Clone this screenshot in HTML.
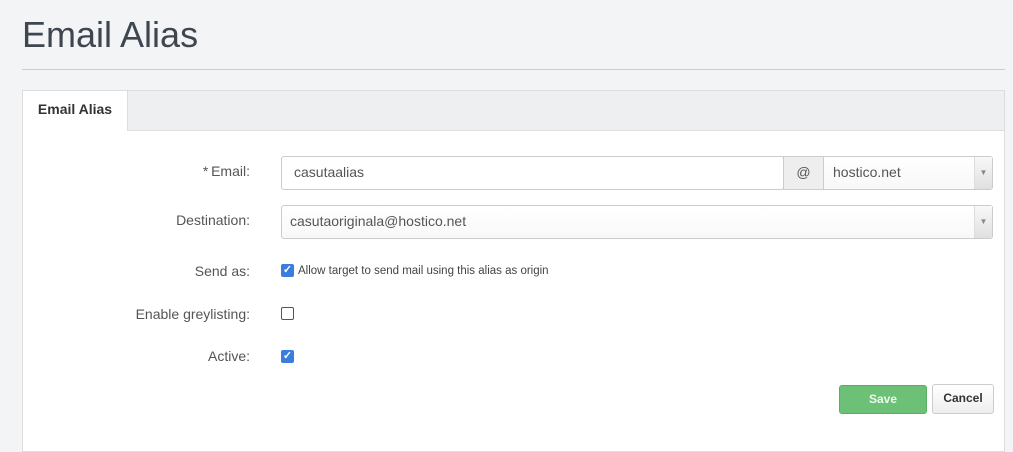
<!DOCTYPE html><html><head><style>
body{margin:0;width:1013px;height:439px;background:#f3f4f6;font-family:"Liberation Sans",sans-serif;color:#444;overflow:hidden;position:relative}
.a{position:absolute}
h1{position:absolute;left:22px;top:14px;margin:0;font-weight:normal;font-size:36px;color:#3f4650}
.hr{left:22px;top:69px;width:983px;height:1px;background:#ccc}
.panel{left:22px;top:90px;width:981px;height:360px;background:#fff;border:1px solid #ddd}
.tabs{left:23px;top:91px;width:981px;height:39px;background:#eeeff0;border-bottom:1px solid #ddd}
.tab{left:23px;top:91px;width:104px;height:40px;background:#fff;border-right:1px solid #ddd;font-weight:bold;font-size:14px;color:#333;line-height:36px;text-align:center}
.lbl{right:763px;font-size:14px;color:#555}
.inp{border:1px solid #ccc;border-radius:3px;background:#fff;font-size:14px;color:#555;box-sizing:border-box;line-height:30px}
.sel{background:linear-gradient(#fff,#f8f8f8)}
.arr{position:absolute;right:0;top:0;width:17px;height:100%;border-left:1px solid #ddd;background:linear-gradient(#f8f8f8,#e0e0e0);font-size:8px;color:#888;text-align:center;line-height:31px}
.cb{width:13px;height:13px;border-radius:2px;box-sizing:border-box}
.on{background:#3b7ddd;color:#fff;font-size:11px;font-weight:bold;line-height:13px;text-align:center}
.off{border:1.5px solid #555}
</style></head><body>
<h1>Email Alias</h1>
<div class="a hr"></div>
<div class="a panel"></div>
<div class="a tabs"></div>
<div class="a tab">Email Alias</div>
<div class="a lbl" style="top:163px">*&thinsp;Email:</div>
<div class="a inp" style="left:281px;top:156px;width:503px;height:34px;padding-left:12px">casutaalias</div>
<div class="a inp" style="left:783px;top:156px;width:41px;height:34px;background:#eee;border-radius:0;text-align:center">@</div>
<div class="a inp sel" style="left:823px;top:156px;width:170px;height:34px;padding-left:9px;border-radius:0 3px 3px 0">hostico.net<div class="arr">▼</div></div>
<div class="a lbl" style="top:212px">Destination:</div>
<div class="a inp sel" style="left:281px;top:205px;width:712px;height:34px;padding-left:8px">casutaoriginala@hostico.net<div class="arr">▼</div></div>
<div class="a lbl" style="top:263px">Send as:</div>
<div class="a cb on" style="left:281px;top:264px">✓</div>
<div class="a" style="left:298px;top:265px;font-size:11.5px;color:#444">Allow target to send mail using this alias as origin</div>
<div class="a lbl" style="top:306px">Enable greylisting:</div>
<div class="a cb off" style="left:281px;top:307px"></div>
<div class="a lbl" style="top:348px">Active:</div>
<div class="a cb on" style="left:281px;top:350px">✓</div>
<div class="a" style="left:839px;top:385px;width:88px;height:29px;background:#6cc176;border:1px solid #5aae63;border-radius:3px;box-sizing:border-box;color:#eef9ef;font-weight:bold;font-size:12px;text-align:center;line-height:27px">Save</div>
<div class="a" style="left:932px;top:384px;width:62px;height:30px;background:linear-gradient(#fff,#eee);border:1px solid #ccc;border-radius:3px;box-sizing:border-box;color:#333;font-weight:bold;font-size:12px;text-align:center;line-height:27px">Cancel</div>
</body></html>
